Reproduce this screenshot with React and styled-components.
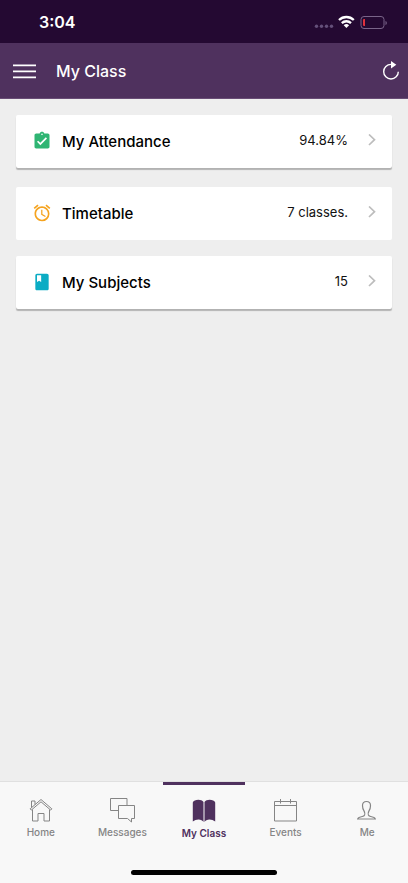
import React from "react";
import styled, { createGlobalStyle } from "styled-components";
import { MdAlarm, MdAssignmentTurnedIn, MdBook } from "react-icons/md";

const cards = [
  {
    id: "attendance",
    title: "My Attendance",
    value: "94.84%",
    color: "#2fb573",
    icon: MdAssignmentTurnedIn,
    raised: true,
  },
  {
    id: "timetable",
    title: "Timetable",
    value: "7 classes.",
    color: "#f5a31f",
    icon: MdAlarm,
    raised: false,
  },
  {
    id: "subjects",
    title: "My Subjects",
    value: "15",
    color: "#0bacc4",
    icon: MdBook,
    raised: true,
  },
];

const HomeIcon = () => (
  <svg viewBox="0 0 26 26" fill="none" stroke="currentColor">
    <path d="M2.200 11.800 13 2.500l10.800 9.300-1.100 1.300L13 4.800l-9.700 8.300z" />
    <path d="M4.500 12.500v11.500h5.500v-7.500h6v7.500h5.500V12.500" />
    <path d="M3.500 10.500V4h3.500v3.500" />
  </svg>
);

const MessagesIcon = () => (
  <svg viewBox="0 0 26 26" fill="none" stroke="currentColor">
    <path d="M9 13.500h-7.500v-12h16.500v7" />
    <path d="M9.500 8.500h16v13h-3v3.500l-4-3.500h-9z" />
  </svg>
);

const ClassIcon = () => (
  <svg viewBox="0 0 26 26" fill="currentColor">
    <path d="M1.800 5.500C2.800 2.300 10.500 1.700 12.500 5v20c-1.500-3.300-7.500-3.300-10.700-.5z" />
    <path d="M24.200 5.500C23.200 2.300 15.500 1.700 13.500 5v20c1.500-3.300 7.500-3.300 10.700-.5z" />
  </svg>
);

const EventsIcon = () => (
  <svg viewBox="0 0 26 26" fill="none" stroke="currentColor">
    <path d="M1.500 4.500h22v19.500h-22zM1.500 8.500h22M7.500 2v4.500M17.500 2v4.500" />
  </svg>
);

const MeIcon = () => (
  <svg viewBox="0 0 26 26" fill="none" stroke="currentColor" strokeWidth="1.200">
    <path d="M12.500 4.500c-2.700 0-4.100 1.700-4 4.200 0 2.700.6 3.800 1.500 5.200.8 1.300 1.100 3.800 0 4.900-1.400 1.300-5.800.7-6.300 3.200h17.600c-.5-2.500-4.900-1.900-6.300-3.200-1.100-1.100-.8-3.600 0-4.900.9-1.400 1.500-2.500 1.500-5.200.1-2.500-1.300-4.200-4-4.200z" />
  </svg>
);

const tabs = [
  { name: "Home", icon: HomeIcon },
  { name: "Messages", icon: MessagesIcon },
  { name: "My Class", icon: ClassIcon },
  { name: "Events", icon: EventsIcon },
  { name: "Me", icon: MeIcon },
];

const StatusIcons = () => (
  <svg width="74" height="16" viewBox="0 0 74 16" aria-hidden="true">
    <g fill="#64507a">
      <circle cx="3.500" cy="12.300" r="1.700" />
      <circle cx="8.500" cy="12.300" r="1.700" />
      <circle cx="13.500" cy="12.300" r="1.700" />
      <circle cx="18.500" cy="12.300" r="1.700" />
    </g>
    <g fill="none" stroke="#fff" strokeWidth="2.300">
      <path d="M26 6a10.600 10.600 0 0 1 14.800 0" />
      <path d="M28.800 9.100a6.700 6.700 0 0 1 9.200 0" />
    </g>
    <path d="M30.700 11.200a4 4 0 0 1 5.400 0l-2.700 2.800z" fill="#fff" />
    <rect x="48" y="2.500" width="23" height="12" rx="3" fill="none" stroke="#796489" />
    <path d="M72.500 7c1.700.5 1.700 3.500 0 4z" fill="#796489" />
    <path d="M52 5v7h-1a1 1 0 0 1-1-1V6a1 1 0 0 1 1-1z" fill="#e0313c" />
  </svg>
);

const App = () => {
  return (
    <>
      <GlobalStyle />
      <Wrapper>
        <StatusBar>
          <time>3:04</time>
          <StatusIcons />
        </StatusBar>
        <Header>
          <IconButton type="button" aria-label="Open menu">
            <svg width="23" height="16" viewBox="0 0 23 16">
              <path
                d="M0 2.300h23M0 8.300h23M0 14.300h23"
                stroke="#fff"
                strokeWidth="1.800"
              />
            </svg>
          </IconButton>
          <h1>My Class</h1>
          <IconButton type="button" aria-label="Refresh">
            <svg width="18" height="20" viewBox="0 0 18 20" fill="none">
              <path
                d="M9.500 3.400H9a7.300 7.300 0 1 0 7.300 7.300"
                stroke="#fff"
                strokeWidth="1.400"
              />
              <path d="M9 0 14.300 3.700 9 7.400z" fill="#fff" />
            </svg>
          </IconButton>
        </Header>
        <CardList>
          {cards.map(({ id, title, value, color, icon: Icon, raised }) => (
            <Card key={id} type="button" $color={color} $raised={raised}>
              <Icon className="icon" />
              <span className="title">{title}</span>
              <span className="detail">
                {value}
                <svg className="arrow" viewBox="0 0 8 12" fill="none">
                  <path d="M1 .5l5.500 5.200L1 11" stroke="#bdbdbd" strokeWidth="1.700" />
                </svg>
              </span>
            </Card>
          ))}
        </CardList>
        <TabBar>
          <div className="tabs">
            {tabs.map(({ name, icon: Icon }) => (
              <Tab key={name} href="#" $active={name === "My Class"}>
                <Icon />
                <span>{name}</span>
              </Tab>
            ))}
          </div>
          <HomeIndicator />
        </TabBar>
      </Wrapper>
    </>
  );
};

const GlobalStyle = createGlobalStyle`
  *, *::before, *::after {
    box-sizing: border-box;
  }
  body {
    margin: 0;
    background: #eeeeee;
    font-family: Inter, "Liberation Sans", sans-serif;
  }
  button {
    font-family: inherit;
    border: none;
    cursor: pointer;
  }
`;

const Wrapper = styled.div`
  min-height: 100vh;
  display: flex;
  flex-direction: column;
`;

const StatusBar = styled.div`
  display: flex;
  align-items: center;
  justify-content: space-between;
  padding: 12px 21px 11px 39px;
  background: #240932;
  color: #fff;
  font-size: 16px;
  font-weight: 600;
  line-height: 20px;
`;

const Header = styled.header`
  display: flex;
  align-items: center;
  padding: 17px 8px 16px 13px;
  background: #4f315e;
  border-bottom: 1px solid #694d76;
  h1 {
    flex: 1;
    margin: 0 0 0 20px;
    color: #fff;
    font-size: 16px;
    font-weight: 500;
    line-height: 22px;
  }
`;

const IconButton = styled.button`
  display: flex;
  padding: 0;
  background: transparent;
`;

const CardList = styled.main`
  flex: 1;
  display: flex;
  flex-direction: column;
  gap: 16px;
  padding: 16px;
`;

const Card = styled.button`
  display: flex;
  align-items: center;
  min-height: 53px;
  margin-bottom: ${({ $raised }) => ($raised ? "3px" : "0")};
  padding: 0 16px;
  background: #fff;
  border-radius: 2px;
  box-shadow: ${({ $raised }) =>
    $raised ? "0 2px 1px rgba(0, 0, 0, 0.25)" : "none"};
  text-align: left;
  .icon {
    width: 20px;
    height: 20px;
    margin-bottom: 2px;
    color: ${({ $color }) => $color};
  }
  .title {
    flex: 1;
    margin-left: 10px;
    color: #000;
    font-size: 15px;
    font-weight: 500;
    line-height: 20px;
  }
  .detail {
    display: flex;
    align-items: center;
    gap: 20px;
    padding-bottom: 4px;
    color: #111;
    font-size: 13px;
    line-height: 20px;
  }
  .arrow {
    width: 8px;
    height: 12px;
  }
`;

const TabBar = styled.nav`
  background: #f8f8f8;
  border-top: 1px solid #e0e0e0;
  padding-bottom: 8px;
  .tabs {
    display: grid;
    grid-template-columns: repeat(5, 1fr);
  }
`;

const Tab = styled.a`
  display: flex;
  flex-direction: column;
  align-items: center;
  gap: 1px;
  padding: 12px 0 28px;
  border-top: 3px solid
    ${({ $active }) => ($active ? "#4f315e" : "transparent")};
  color: ${({ $active }) => ($active ? "#4f315e" : "#858585")};
  font-size: 10px;
  font-weight: ${({ $active }) => ($active ? 600 : 500)};
  line-height: ${({ $active }) => ($active ? "18px" : "16px")};
  text-decoration: none;
  svg {
    width: 26px;
    height: 26px;
  }
`;

const HomeIndicator = styled.div`
  width: 146px;
  height: 5px;
  margin: 0 auto;
  border-radius: 3px;
  background: #000;
`;

export default App;
